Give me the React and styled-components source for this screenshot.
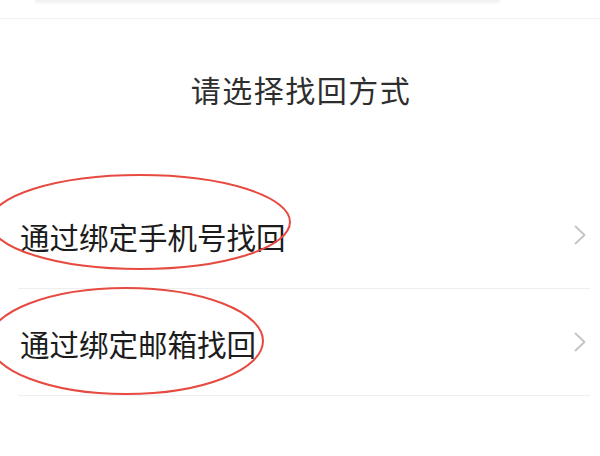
import React from 'react';
import styled, { createGlobalStyle } from 'styled-components';

const Global = createGlobalStyle`
	html, body {
		margin: 0;
		padding: 0;
		background: #fff;
	}
	body {
		font-family: "Noto Sans CJK SC", "Noto Sans", sans-serif;
	}
`

const options = ['通过绑定手机号找回', '通过绑定邮箱找回'];

const App = () => {
	return (
		<>
		<Global />
		<Page>
			<TopCard />
			<Header>
				<Title>请选择找回方式</Title>
			</Header>
			<List>
				{options.map(label => (
					<Row key={label}>
						<Label>{label}</Label>
						<Chevron viewBox="0 0 12 20">
							<polyline points="1.5,1.5 10.5,10 1.5,18.5" />
						</Chevron>
					</Row>
				))}
			</List>
			{/* red hand-drawn marks over the two options */}
			<Marks viewBox="0 0 600 456">
				<ellipse cx="140" cy="222" rx="150" ry="47" />
				<ellipse cx="126" cy="341" rx="137" ry="53" />
			</Marks>
		</Page>
		</>
	);
}

export default App;

// styles
const Page = styled.div`
	position: relative;
	width: 600px;
	height: 456px;
	overflow: hidden;
	background: #fff;
`
const TopCard = styled.div`
	height: 18px;
	border-bottom: 1px solid #f2f2f2;
	position: relative;
	&::before {
		content: '';
		display: block;
		margin: 0 100px 0 35px;
		height: 2px;
		background: #f2f2f2;
		box-shadow: 0 1px 3px rgba(0,0,0,.07);
		border-radius: 0 0 6px 6px;
	}
`
const Header = styled.div`
	height: 163px;
	padding-top: 52px;
	box-sizing: border-box;
	display: flex;
	justify-content: center;
`
const Title = styled.h1`
	margin: 0;
	font-size: 30px;
	line-height: 36px;
	font-weight: 400;
	color: #2e2e2e;
	letter-spacing: 1.5px;
	padding-left: 2px;
`
const List = styled.div`
	padding: 0 10px 0 18px;
`
const Row = styled.div`
	height: 106px;
	display: flex;
	align-items: center;
	justify-content: space-between;
	border-bottom: 1px solid #eeeeee;
`
const Label = styled.span`
	font-size: 29.5px;
	color: #1c1c1c;
	padding-left: 2px;
	padding-top: 2px;
`
const Chevron = styled.svg`
	width: 12px;
	height: 20px;
	margin-right: 4px;
	fill: none;
	stroke: #c4c4c4;
	stroke-width: 1.8;
	stroke-linecap: round;
	stroke-linejoin: round;
`
const Marks = styled.svg`
	position: absolute;
	top: 0;
	left: 0;
	width: 600px;
	height: 456px;
	pointer-events: none;
	fill: none;
	stroke: #e64a40;
	stroke-width: 2;
`
